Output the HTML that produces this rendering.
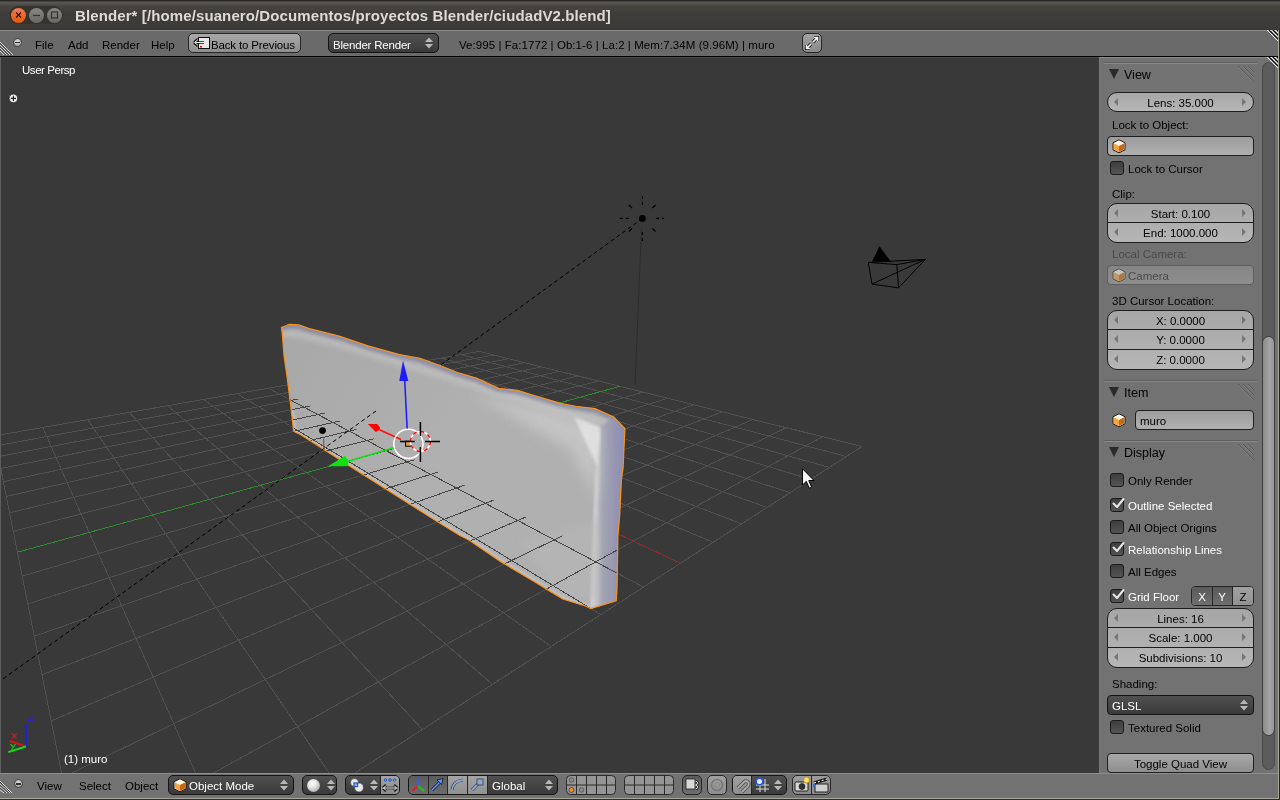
<!DOCTYPE html>
<html><head><meta charset="utf-8">
<style>
*{margin:0;padding:0;box-sizing:border-box}
html,body{width:1280px;height:800px;overflow:hidden;background:#1e1e1e;font-family:"Liberation Sans",sans-serif;font-size:11.5px}
.a{position:absolute}
.t{position:absolute;white-space:nowrap;will-change:transform;color:#000;font-size:11.5px;line-height:14px;height:14px}
.w{color:#fff}
#title{left:0;top:0;width:1280px;height:30px;background:linear-gradient(#2a2927 0px,#2a2927 1px,#5c5b56 2px,#56554f 3px,#46453f 6px,#3e3d39 14px,#3b3a36 29px,#34332f 30px);}
#hdr{left:0;top:30px;width:1278px;height:27px;background:#6a6a6a;border-top:1px solid #8c8c8c;border-bottom:1px solid #000}
#vp{left:0;top:57px;width:1099px;height:716px;background:#393939;border-left:1px solid #5e5e5e;border-top:1px solid #4a4a4a}
#np{left:1099px;top:57px;width:179px;height:716px;background:#727272;border-left:1px solid #7c7c7c;border-top:1px solid #8a8a8a}
#bhdr{left:0;top:773px;width:1278px;height:26px;background:#727272;border-top:1px solid #8e8e8e;border-bottom:1px solid #a8a69e}
#bedge{left:0;top:799px;width:1280px;height:1px;background:#2e2e2c}
#redge{left:1278px;top:30px;width:2px;height:770px;background:#a8a69e;border-right:1px solid #222}
.wb{position:absolute;top:7.5px;width:15px;height:15px;border-radius:50%;}
.rb{position:absolute;border:1px solid #191919;border-radius:4px;}
.num{background:linear-gradient(#a6a6a6,#b6b6b6);border:1px solid #1e1e1e}
.chk{position:absolute;width:14px;height:14px;border:1px solid #1a1a1a;border-radius:3px;background:linear-gradient(#3e3e3e,#545454)}
.dd{background:linear-gradient(#505050,#3a3a3a);border:1px solid #141414}
.ctr{text-align:center}
.arl{position:absolute;width:0;height:0;border-top:4px solid transparent;border-bottom:4px solid transparent;border-right:4px solid #777}
.arr{position:absolute;width:0;height:0;border-top:4px solid transparent;border-bottom:4px solid transparent;border-left:4px solid #777}
.phl{position:absolute;left:1104px;width:153px;height:2px;border-top:1px solid #5e5e5e;border-bottom:1px solid #8a8a8a}
.tri{position:absolute;width:0;height:0;border-left:5px solid transparent;border-right:5px solid transparent;border-top:10px solid #2a2a2a}
</style></head><body>
<div id="title" class="a"></div>
<div class="a" style="left:9px;top:6px;width:54px;height:18px;border-radius:9px;background:#34332f"></div>
<div class="wb" style="left:11px;background:linear-gradient(#f27c52,#ea6420 60%,#e65a10)"></div>
<div class="wb" style="left:29px;background:linear-gradient(#8a8882,#76746e 60%,#6c6a65)"></div>
<div class="wb" style="left:47px;background:linear-gradient(#8a8882,#76746e 60%,#6c6a65)"></div>
<svg class="a" style="left:0;top:0" width="70" height="30">
<path d="M16 12.5L21 17.5M21 12.5L16 17.5" stroke="#2a1408" stroke-width="1.1"/>
<path d="M33 15.5H40" stroke="#33322e" stroke-width="1.2"/>
<rect x="51.5" y="12" width="6" height="6" fill="none" stroke="#33322e" stroke-width="1.2"/>
</svg>
<div class="t" style="left:75px;top:7px;font-size:15px;line-height:18px;height:18px;font-weight:bold;color:#dfdbd2;letter-spacing:0.11px">Blender* [/home/suanero/Documentos/proyectos Blender/ciudadV2.blend]</div>

<div id="hdr" class="a"></div>
<div id="redge" class="a"></div>
<svg class="a" style="left:1267px;top:30px" width="11" height="11" shape-rendering="crispEdges"><path d="M0 0L11 11M4 0L11 7M8 0L11 3" stroke="#f0f0f0" stroke-width="1"/><path d="M2 0L11 9M6 0L11 5M10 0L11 1" stroke="#000" stroke-width="1"/></svg>
<svg class="a" style="left:0;top:30px" width="20" height="26"><path d="M0 12L13 25M0 15L10 25M0 18L7 25M0 21L4 25" stroke="#e6e6e6" stroke-width="0.9"/><path d="M0 13L12 25M0 16L9 25M0 19L6 25" stroke="#2a2a2a" stroke-width="0.6"/></svg>
<div class="a" style="left:13px;top:37.5px;width:9px;height:9px;border-radius:50%;background:radial-gradient(circle at 50% 30%,#dcdcdc,#9a9a9a);border:1px solid #444"></div>
<div class="a" style="left:15px;top:41.5px;width:5px;height:1.5px;background:#333"></div>
<div class="t" style="left:35px;top:37.6px">File</div>
<div class="t" style="left:68px;top:37.6px">Add</div>
<div class="t" style="left:102px;top:37.6px">Render</div>
<div class="t" style="left:151px;top:37.6px">Help</div>
<div class="rb" style="left:188px;top:33px;width:113px;height:20px;background:linear-gradient(#a8a8a8,#8e8e8e);border-color:#262626;border-radius:5px"></div>
<svg class="a" style="left:192px;top:35px" width="20" height="16"><rect x="6.5" y="2.5" width="11" height="11" fill="#e8e8e8" stroke="#111" stroke-width="1"/><path d="M2 7.5H12M2 7.5L6 4M2 7.5L6 11" stroke="#111" stroke-width="2.4" fill="none"/><path d="M2.6 7.5H12M2.6 7.5L6 4.6M2.6 7.5L6 10.4" stroke="#f0f0f0" stroke-width="1" fill="none"/><rect x="8" y="11" width="2" height="1.5" fill="#d00"/></svg>
<div class="t" style="left:211px;top:37.6px;letter-spacing:-0.15px">Back to Previous</div>
<div class="rb dd" style="left:328px;top:33px;width:111px;height:20px;border-radius:5px"></div>
<div class="t w" style="left:333px;top:37.6px;letter-spacing:-0.2px">Blender Render</div>
<svg class="a" style="left:424px;top:36px" width="10" height="14"><path d="M1 6L5 1.5L9 6ZM1 8L5 12.5L9 8Z" fill="#b8b8b8"/></svg>
<div class="t" style="left:459px;top:37.6px;letter-spacing:0.06px">Ve:995 | Fa:1772 | Ob:1-6 | La:2 | Mem:7.34M (9.96M) | muro</div>
<div class="rb" style="left:802px;top:33px;width:20px;height:20px;background:linear-gradient(#a2a2a2,#8a8a8a);border-color:#262626;border-radius:5px"></div>
<svg class="a" style="left:802px;top:33px" width="20" height="20"><path d="M11 9L15.5 4.5M12 4.5H15.5V8M9 11L4.5 15.5M4.5 12V15.5H8" stroke="#111" stroke-width="3.2" fill="none"/><path d="M11 9L15.5 4.5M12 4.5H15.5V8M9 11L4.5 15.5M4.5 12V15.5H8" stroke="#fff" stroke-width="1.6" fill="none"/></svg>
<div id="vp" class="a"></div>
<svg class="a" style="left:1px;top:58px" width="1098" height="715" viewBox="1 58 1098 715">
<defs>
<clipPath id="wc"><path d="M281.4,327.5 L289.3,324.4 L298.9,324.9 L308.5,328.4 L340,336.3 L368,345.9 L399.5,354.6 L420,358.4 L438.75,365 L457.5,372.5 L476.25,378.1 L498.75,388.4 L517.5,390.3 L532.5,395 L560.6,403.4 L575.6,406.25 L595,408.6 L613.75,416.9 L625,428.75 L624.4,438.75 L623.1,467.5 L621.4,480 L619.7,515 L617.9,536 L617,588.6 L616.2,600.8 L590.8,608.7 L585.5,606 L562.8,599 L547,589.4 L540,585 L500.8,561.6 L469.3,540.2 L460,535.5 L438,522 L387,489.7 L348,465 L324.75,450 L300,434.3 L296,432.5 L293.6,430.8 L291,408 L287.5,380 L284,355.5 L282.3,333.6 Z"/></clipPath>
<linearGradient id="wg" x1="280" y1="330" x2="600" y2="520" gradientUnits="userSpaceOnUse">
<stop offset="0" stop-color="#a8a8a8"/><stop offset="0.55" stop-color="#b0b0b0"/><stop offset="1" stop-color="#b0b0b2"/></linearGradient>
<filter id="bl1" x="-20%" y="-20%" width="140%" height="140%"><feGaussianBlur stdDeviation="1.6"/></filter>
<filter id="bl2" x="-20%" y="-20%" width="140%" height="140%"><feGaussianBlur stdDeviation="3"/></filter>
<filter id="bl3" x="-30%" y="-30%" width="160%" height="160%"><feGaussianBlur stdDeviation="7"/></filter>
<linearGradient id="topg" x1="0" y1="0" x2="0" y2="1"><stop offset="0" stop-color="#9a9ab0"/><stop offset="1" stop-color="#c8c8ca" stop-opacity="0"/></linearGradient>
<linearGradient id="rg" x1="594" y1="0" x2="622" y2="0" gradientUnits="userSpaceOnUse"><stop offset="0" stop-color="#cfcfd2"/><stop offset="0.3" stop-color="#a4a4b2"/><stop offset="1" stop-color="#8e8eb2"/></linearGradient>
</defs>
<path d="M-5.7,435.9L479.6,351.4 M-5.7,435.9L95.0,940.3 M-3.7,445.8L493.8,355.0 M42.8,427.5L230.8,852.8 M-1.6,456.6L508.8,358.7 M87.7,419.7L337.0,784.4 M0.8,468.5L524.7,362.6 M129.2,412.4L422.4,729.4 M3.4,481.7L541.5,366.8 M167.7,405.7L492.5,684.3 M6.4,496.4L559.3,371.3 M203.6,399.5L551.1,646.6 M9.6,512.8L578.3,376.0 M237.0,393.6L600.8,614.6 M13.3,531.3L598.4,381.0 M268.3,388.2L643.4,587.1 M22.3,576.2L642.9,392.0 M325.2,378.3L713.0,542.3 M27.8,603.9L667.5,398.2 M351.2,373.8L741.7,523.9 M34.3,636.3L693.9,404.7 M375.6,369.5L767.2,507.4 M42.0,674.7L722.3,411.8 M398.7,365.5L790.1,492.7 M51.2,720.9L753.1,419.4 M420.6,361.7L810.7,479.4 M62.5,777.5L786.3,427.7 M441.3,358.1L829.3,467.4 M76.7,848.5L822.4,436.7 M460.9,354.7L846.3,456.5 M95.0,940.3L861.8,446.5 M479.6,351.4L861.8,446.5" stroke="#4f4f4f" stroke-width="1" fill="none" shape-rendering="crispEdges"/>
<path d="M17.5,552.2L619.9,386.3" stroke="#2f8a2f" stroke-width="1" fill="none" shape-rendering="crispEdges"/>
<path d="M297.7,383.1L680.5,563.3" stroke="#8a2c2c" stroke-width="1" fill="none" shape-rendering="crispEdges"/>
<path d="M642.4,218.4 L440,365.5" stroke="#000" stroke-width="1" stroke-dasharray="4,3" fill="none"/>
<path d="M641.5,228 L635,385" stroke="#2e2e2e" stroke-width="1" fill="none"/>
<g fill="none" stroke="#000" stroke-width="1.2">
<path d="M642.4,196V205M642.4,232V241M619.75,218.4H629M656,218.4H664" stroke-dasharray="3,3"/>
<path d="M629,205L632,208M655.5,205L652.5,208M629,231.5L632,228.5M655.5,231.5L652.5,228.5"/>
</g>
<circle cx="642.4" cy="218.4" r="3.4" fill="#000"/>
<g fill="none" stroke="#000" stroke-width="1">
<path d="M868.25,262.4L872,284.1L898.6,287.9L896.75,264.6Z M868.25,262.4L925.25,259.4L872,284.1 M896.75,264.6L925.25,259.4L898.6,287.9"/>
</g>
<path d="M879.5,246.25L872,261.6L890.75,261.6Z" fill="#000"/>
<g clip-path="url(#wc)">
<rect x="270" y="315" width="370" height="300" fill="url(#wg)"/>
<path d="M275,320 L298.9,322 L340,332 L438,362 L564,399 L612,412" transform="translate(0,12)" stroke="#c6c6c6" stroke-width="5" fill="none" filter="url(#bl2)" opacity="0.9"/>
<path d="M281.4,327.5 L289.3,324.4 L298.9,324.9 L308.5,328.4 L340,336.3 L368,345.9 L399.5,354.6 L420,358.4 L438.75,365 L457.5,372.5 L476.25,378.1 L498.75,388.4 L517.5,390.3 L532.5,395 L560.6,403.4 L575.6,406.25 L595,408.6 L613.75,416.9 L625,428.75 L624.4,438.75" stroke="#8888a4" stroke-width="8" fill="none" filter="url(#bl1)" opacity="0.8"/>
<path d="M598,428 L613.75,416.9 L630,430 L630,612 L590.8,610 Z" fill="url(#rg)" filter="url(#bl1)"/>
<path d="M598.7,432 L591.5,606" stroke="#d4d4d4" stroke-width="2.5" filter="url(#bl1)"/>
<path d="M470,392 L560,412 L600,426 L598,500 L570,450 Z" fill="#d4d4d4" opacity="0.55" filter="url(#bl3)"/>
<path d="M574,417 L600,427 L597,466 Z" fill="#ececec" opacity="0.7" filter="url(#bl1)"/>
<path d="M520,540 L598,520 L597,600 L560,598Z" fill="#b8b8b8" opacity="0.5" filter="url(#bl2)"/>
<path d="M291,408 L293.6,430.8 L296,432.5 L300,434.3 L324.75,450 L348,465 L387,489.7 L438,522 L460,535.5 L469.3,540.2 L500.8,561.6 L540,585 L547,589.4 L562.8,599 L585.5,606 L590.8,608.7" stroke="#c8c8cc" stroke-width="5" fill="none" filter="url(#bl1)" opacity="0.8"/>
<g clip-path="url(#lw)"><path d="M-5.7,435.9L479.6,351.4 M-5.7,435.9L95.0,940.3 M-3.7,445.8L493.8,355.0 M42.8,427.5L230.8,852.8 M-1.6,456.6L508.8,358.7 M87.7,419.7L337.0,784.4 M0.8,468.5L524.7,362.6 M129.2,412.4L422.4,729.4 M3.4,481.7L541.5,366.8 M167.7,405.7L492.5,684.3 M6.4,496.4L559.3,371.3 M203.6,399.5L551.1,646.6 M9.6,512.8L578.3,376.0 M237.0,393.6L600.8,614.6 M13.3,531.3L598.4,381.0 M268.3,388.2L643.4,587.1 M22.3,576.2L642.9,392.0 M325.2,378.3L713.0,542.3 M27.8,603.9L667.5,398.2 M351.2,373.8L741.7,523.9 M34.3,636.3L693.9,404.7 M375.6,369.5L767.2,507.4 M42.0,674.7L722.3,411.8 M398.7,365.5L790.1,492.7 M51.2,720.9L753.1,419.4 M420.6,361.7L810.7,479.4 M62.5,777.5L786.3,427.7 M441.3,358.1L829.3,467.4 M76.7,848.5L822.4,436.7 M460.9,354.7L846.3,456.5 M95.0,940.3L861.8,446.5 M479.6,351.4L861.8,446.5 M17.5,552.2L619.9,386.3 M297.7,383.1L680.5,563.3" stroke="#464646" stroke-width="1" fill="none" shape-rendering="crispEdges"/></g>
</g>
<clipPath id="lw"><path d="M280,390 L565,537 L600,548 L626,538 L626,620 L280,620Z"/></clipPath>
<path d="M281.4,327.5 L289.3,324.4 L298.9,324.9 L308.5,328.4 L340,336.3 L368,345.9 L399.5,354.6 L420,358.4 L438.75,365 L457.5,372.5 L476.25,378.1 L498.75,388.4 L517.5,390.3 L532.5,395 L560.6,403.4 L575.6,406.25 L595,408.6 L613.75,416.9 L625,428.75 L624.4,438.75 L623.1,467.5 L621.4,480 L619.7,515 L617.9,536 L617,588.6 L616.2,600.8 L590.8,608.7 L585.5,606 L562.8,599 L547,589.4 L540,585 L500.8,561.6 L469.3,540.2 L460,535.5 L438,522 L387,489.7 L348,465 L324.75,450 L300,434.3 L296,432.5 L293.6,430.8 L291,408 L287.5,380 L284,355.5 L282.3,333.6 Z" fill="none" stroke="#f7901c" stroke-width="1.25"/>
<path d="M376,411 L0,681" stroke="#000" stroke-width="1" stroke-dasharray="4,3" fill="none"/>
<circle cx="322.5" cy="430.6" r="3.4" fill="#000"/>
<path d="M323.8,438.5V450" stroke="#555" stroke-width="1"/>
<path d="M407.2,429.5L404.75,381" stroke="#2020ff" stroke-width="1.6"/>
<path d="M403,360.5L399.3,381L408.3,381Z" fill="#1c1cff"/>
<path d="M401,439.6L380,429.9" stroke="#ff1010" stroke-width="1.6"/>
<path d="M367.9,423.9L377.25,423.9L379.9,427.25L379.9,429.9L375.75,432.1Z" fill="#ff0000"/>
<path d="M394.5,447.5L346,462" stroke="#10e010" stroke-width="1.8"/>
<path d="M328,466.2L345,455.8L348.8,461.2L347.5,466.2Z" fill="#10e010"/>
<path d="M375.4,438.5h1" stroke="#f0901e" stroke-width="1.5"/>
<circle cx="408.4" cy="443.8" r="14.6" fill="none" stroke="#fff" stroke-width="1.5"/>
<rect x="405.6" y="441.2" width="5" height="5" fill="#f0a040" stroke="#000" stroke-width="1"/>
<circle cx="420.4" cy="441.5" r="10" fill="none" stroke="#fff" stroke-width="1.5"/>
<circle cx="420.4" cy="441.5" r="10" fill="none" stroke="#f00" stroke-width="1.5" stroke-dasharray="3.9,3.9"/>
<path d="M420.4,422V436M420.4,447V462M400,441.5H414.8M425,441.5H440" stroke="#000" stroke-width="1.5"/>
<path d="M25.9,746.5V723.3" stroke="#2020e0" stroke-width="2"/>
<path d="M25.9,746.5L9.8,740.9" stroke="#e01010" stroke-width="2"/>
<path d="M25.9,746.5L8.3,752.1" stroke="#10e010" stroke-width="2"/>
<g fill="none" stroke-width="1.2">
<path d="M28.5,715.5H33L28.5,720.5H33" stroke="#2626c8"/>
<path d="M12,733.5L16.5,738.5M16.5,733.5L12,738.5" stroke="#c02020"/>
<path d="M10.5,744L13,747M15.5,744L11,751" stroke="#20c020"/>
</g>
<circle cx="13.4" cy="98.4" r="4.3" fill="#f0f0f0" stroke="#222" stroke-width="0.8"/>
<path d="M13.4,95.8V101M10.8,98.4H16" stroke="#222" stroke-width="1.2"/>
<path d="M802.5,468.8V485L806.3,481.4L809.3,488.2L811.6,487.2L808.8,480.5H814Z" fill="#f4f4f4" stroke="#000" stroke-width="1"/>
</svg>
<div class="t w" style="left:22px;top:63px;letter-spacing:-0.45px">User Persp</div>
<div class="t w" style="left:64px;top:752px">(1) muro</div>
<div id="np" class="a"></div>
<svg class="a" style="left:1266px;top:57px" width="12" height="12" shape-rendering="crispEdges"><path d="M1 0L12 11M5 0L12 7M9 0L12 3" stroke="#f0f0f0" stroke-width="1"/><path d="M3 0L12 9M7 0L12 5M11 0L12 1" stroke="#000" stroke-width="1"/></svg>
<!-- scrollbar -->
<div class="a" style="left:1262px;top:62px;width:13px;height:708px;border-radius:6.5px;background:#5c5c5c;border:1px solid #4a4a4a"></div>
<div class="a" style="left:1262px;top:336px;width:13px;height:400px;border-radius:6.5px;background:linear-gradient(90deg,#8a8a8a,#a4a4a4 60%,#969696);border:1px solid #3e3e3e"></div>

<!-- View panel -->
<div class="phl" style="top:62px"></div>
<svg class="a" style="left:1237px;top:66px" width="20" height="18"><path d="M1 0L17 16M6 0L17 11M11 0L17 6" stroke="#5a5a5a" stroke-width="1"/><path d="M1 1L16 16M6 1L16 11M11 1L16 6" stroke="#8a8a8a" stroke-width="0.6"/></svg>
<div class="tri" style="left:1109px;top:69px"></div>
<div class="t" style="left:1124px;top:67px;font-size:12.5px;line-height:16px">View</div>

<div class="rb num" style="left:1107px;top:92px;width:147px;height:20px;border-radius:10px"></div>
<div class="arl" style="left:1114px;top:98px"></div><div class="arr" style="left:1242px;top:98px"></div>
<div class="t ctr" style="left:1107px;top:96px;width:147px">Lens: 35.000</div>

<div class="t" style="left:1112px;top:118px">Lock to Object:</div>
<div class="rb" style="left:1107px;top:136px;width:147px;height:20px;background:linear-gradient(#9c9c9c,#b0b0b0);border-color:#1e1e1e"></div>
<svg class="a" style="left:1112px;top:139px" width="15" height="15"><path d="M7 0.8L13 3.8V10.8L7 13.8L1 10.8V3.8Z" fill="#f9f0e4" stroke="#2a1a08" stroke-width="1"/><path d="M7 6.8L12 4.3V10.5L7 13Z" fill="#c86a10"/><path d="M7 6.8L2 4.3V10.5L7 13Z" fill="#f5a443"/><path d="M2 4.3L7 1.8L12 4.3L7 6.8Z" fill="#fff6ea"/></svg>

<div class="chk" style="left:1110px;top:161px"></div>
<div class="t" style="left:1128px;top:162px">Lock to Cursor</div>

<div class="t" style="left:1112px;top:187px">Clip:</div>
<div class="rb num" style="left:1107px;top:203px;width:147px;height:40px;border-radius:10px"></div>
<div class="a" style="left:1108px;top:222px;width:145px;height:1px;background:#1e1e1e"></div>
<div class="arl" style="left:1114px;top:209px"></div><div class="arr" style="left:1242px;top:209px"></div>
<div class="arl" style="left:1114px;top:228px"></div><div class="arr" style="left:1242px;top:228px"></div>
<div class="t ctr" style="left:1107px;top:207px;width:147px">Start: 0.100</div>
<div class="t ctr" style="left:1107px;top:226px;width:147px">End: 1000.000</div>

<div class="t" style="left:1112px;top:247px;color:#4a4a4a">Local Camera:</div>
<div class="rb" style="left:1107px;top:265px;width:147px;height:20px;background:linear-gradient(#858585,#8e8e8e);border-color:#5e5e5e"></div>
<svg class="a" style="left:1112px;top:268px;opacity:0.55" width="15" height="15"><path d="M7 0.8L13 3.8V10.8L7 13.8L1 10.8V3.8Z" fill="#f9f0e4" stroke="#2a1a08" stroke-width="1"/><path d="M7 6.8L12 4.3V10.5L7 13Z" fill="#c86a10"/><path d="M7 6.8L2 4.3V10.5L7 13Z" fill="#f5a443"/><path d="M2 4.3L7 1.8L12 4.3L7 6.8Z" fill="#fff6ea"/></svg>
<div class="t" style="left:1128px;top:269px;color:#4a4a4a">Camera</div>

<div class="t" style="left:1112px;top:294px">3D Cursor Location:</div>
<div class="rb num" style="left:1107px;top:310px;width:147px;height:60px;border-radius:10px"></div>
<div class="a" style="left:1108px;top:329px;width:145px;height:1px;background:#1e1e1e"></div>
<div class="a" style="left:1108px;top:349px;width:145px;height:1px;background:#1e1e1e"></div>
<div class="arl" style="left:1114px;top:316px"></div><div class="arr" style="left:1242px;top:316px"></div>
<div class="arl" style="left:1114px;top:335px"></div><div class="arr" style="left:1242px;top:335px"></div>
<div class="arl" style="left:1114px;top:355px"></div><div class="arr" style="left:1242px;top:355px"></div>
<div class="t ctr" style="left:1107px;top:314px;width:147px">X: 0.0000</div>
<div class="t ctr" style="left:1107px;top:333px;width:147px">Y: 0.0000</div>
<div class="t ctr" style="left:1107px;top:353px;width:147px">Z: 0.0000</div>

<!-- Item panel -->
<div class="phl" style="top:380px"></div>
<svg class="a" style="left:1237px;top:384px" width="20" height="18"><path d="M1 0L17 16M6 0L17 11M11 0L17 6" stroke="#5a5a5a" stroke-width="1"/><path d="M1 1L16 16M6 1L16 11M11 1L16 6" stroke="#8a8a8a" stroke-width="0.6"/></svg>
<div class="tri" style="left:1109px;top:387px"></div>
<div class="t" style="left:1124px;top:385px;font-size:12.5px;line-height:16px">Item</div>
<svg class="a" style="left:1112px;top:413px" width="15" height="15"><path d="M7 0.8L13 3.8V10.8L7 13.8L1 10.8V3.8Z" fill="#f9f0e4" stroke="#2a1a08" stroke-width="1"/><path d="M7 6.8L12 4.3V10.5L7 13Z" fill="#c86a10"/><path d="M7 6.8L2 4.3V10.5L7 13Z" fill="#f5a443"/><path d="M2 4.3L7 1.8L12 4.3L7 6.8Z" fill="#fff6ea"/></svg>
<div class="rb" style="left:1135px;top:410px;width:119px;height:20px;background:linear-gradient(#9c9c9c,#b0b0b0);border-color:#1e1e1e"></div>
<div class="t" style="left:1140px;top:414px">muro</div>

<!-- Display panel -->
<div class="phl" style="top:440px"></div>
<svg class="a" style="left:1237px;top:444px" width="20" height="18"><path d="M1 0L17 16M6 0L17 11M11 0L17 6" stroke="#5a5a5a" stroke-width="1"/><path d="M1 1L16 16M6 1L16 11M11 1L16 6" stroke="#8a8a8a" stroke-width="0.6"/></svg>
<div class="tri" style="left:1109px;top:447px"></div>
<div class="t" style="left:1124px;top:445px;font-size:12.5px;line-height:16px">Display</div>

<div class="chk" style="left:1110px;top:473px"></div>
<div class="t" style="left:1128px;top:474px">Only Render</div>
<div class="chk" style="left:1110px;top:498px"></div>
<div class="t w" style="left:1128px;top:499px">Outline Selected</div>
<div class="chk" style="left:1110px;top:520px"></div>
<div class="t" style="left:1128px;top:521px">All Object Origins</div>
<div class="chk" style="left:1110px;top:542px"></div>
<div class="t w" style="left:1128px;top:543px">Relationship Lines</div>
<div class="chk" style="left:1110px;top:564px"></div>
<div class="t" style="left:1128px;top:565px">All Edges</div>
<div class="chk" style="left:1110px;top:589px"></div>
<div class="t w" style="left:1128px;top:590px">Grid Floor</div>
<svg class="a" style="left:1110px;top:495px" width="20" height="110"><g fill="none" stroke="#e8e8e8" stroke-width="2" stroke-linecap="round" stroke-linejoin="round"><path d="M3.5 8.5L7 12L13.5 4"/><path d="M3.5 52.5L7 56L13.5 48"/><path d="M3.5 99.5L7 103L13.5 95"/></g></svg>
<div class="rb" style="left:1191px;top:586px;width:63px;height:20px;background:#999;border-color:#262626"></div>
<div class="a" style="left:1192px;top:587px;width:20px;height:18px;background:linear-gradient(#5a5a5a,#6e6e6e);border-radius:3px 0 0 3px"></div>
<div class="a" style="left:1212px;top:587px;width:20px;height:18px;background:linear-gradient(#5a5a5a,#6e6e6e);border-left:1px solid #262626"></div>
<div class="a" style="left:1232px;top:587px;width:21px;height:18px;background:linear-gradient(#a0a0a0,#929292);border-left:1px solid #262626;border-radius:0 3px 3px 0"></div>
<div class="t w ctr" style="left:1192px;top:590px;width:20px">X</div>
<div class="t w ctr" style="left:1212px;top:590px;width:20px">Y</div>
<div class="t ctr" style="left:1233px;top:590px;width:20px">Z</div>

<div class="rb num" style="left:1107px;top:608px;width:147px;height:60px;border-radius:10px"></div>
<div class="a" style="left:1108px;top:627px;width:145px;height:1px;background:#1e1e1e"></div>
<div class="a" style="left:1108px;top:647px;width:145px;height:1px;background:#1e1e1e"></div>
<div class="arl" style="left:1114px;top:614px"></div><div class="arr" style="left:1242px;top:614px"></div>
<div class="arl" style="left:1114px;top:633px"></div><div class="arr" style="left:1242px;top:633px"></div>
<div class="arl" style="left:1114px;top:653px"></div><div class="arr" style="left:1242px;top:653px"></div>
<div class="t ctr" style="left:1107px;top:612px;width:147px">Lines: 16</div>
<div class="t ctr" style="left:1107px;top:631px;width:147px">Scale: 1.000</div>
<div class="t ctr" style="left:1107px;top:651px;width:147px">Subdivisions: 10</div>

<div class="t" style="left:1112px;top:677px">Shading:</div>
<div class="rb dd" style="left:1107px;top:695px;width:147px;height:20px"></div>
<div class="t w" style="left:1112px;top:699px">GLSL</div>
<svg class="a" style="left:1239px;top:698px" width="10" height="14"><path d="M1 6L5 1.5L9 6ZM1 8L5 12.5L9 8Z" fill="#b8b8b8"/></svg>
<div class="chk" style="left:1110px;top:720px"></div>
<div class="t" style="left:1128px;top:721px">Textured Solid</div>

<div class="rb" style="left:1107px;top:753px;width:147px;height:20px;background:linear-gradient(#a8a8a8,#8e8e8e);border-color:#1e1e1e"></div>
<div class="t ctr" style="left:1107px;top:757px;width:147px">Toggle Quad View</div>
<div id="bhdr" class="a"></div><div id="bedge" class="a"></div>
<svg class="a" style="left:0;top:773px" width="20" height="26"><path d="M0 8L12 20M0 11L10 20M0 14L7 20M0 17L4 20" stroke="#e6e6e6" stroke-width="0.9"/><path d="M0 9L11 20M0 12L9 20M0 15L6 20" stroke="#2a2a2a" stroke-width="0.6"/></svg>
<div class="a" style="left:14px;top:779px;width:9px;height:9px;border-radius:50%;background:radial-gradient(circle at 50% 30%,#dcdcdc,#9a9a9a);border:1px solid #444"></div>
<div class="a" style="left:16px;top:783px;width:5px;height:1.5px;background:#333"></div>
<div class="t" style="left:37px;top:779px">View</div>
<div class="t" style="left:79px;top:779px">Select</div>
<div class="t" style="left:125px;top:779px">Object</div>

<div class="rb dd" style="left:168px;top:775px;width:126px;height:20px;border-radius:5px"></div>
<svg class="a" style="left:173px;top:778px" width="15" height="15"><path d="M7 0.8L13 3.8V10.8L7 13.8L1 10.8V3.8Z" fill="#f9f0e4" stroke="#2a1a08" stroke-width="1"/><path d="M7 6.8L12 4.3V10.5L7 13Z" fill="#c86a10"/><path d="M7 6.8L2 4.3V10.5L7 13Z" fill="#f5a443"/><path d="M2 4.3L7 1.8L12 4.3L7 6.8Z" fill="#fff6ea"/></svg>
<div class="t w" style="left:189px;top:779px">Object Mode</div>
<svg class="a" style="left:279px;top:778px" width="10" height="14"><path d="M1 6L5 1.5L9 6ZM1 8L5 12.5L9 8Z" fill="#b8b8b8"/></svg>

<div class="rb dd" style="left:302px;top:775px;width:35px;height:20px;border-radius:5px"></div>
<div class="a" style="left:307px;top:779px;width:13px;height:13px;border-radius:50%;background:radial-gradient(circle at 40% 35%,#fff,#e0e0e0 40%,#8a8a8a 100%)"></div>
<svg class="a" style="left:326px;top:778px" width="10" height="14"><path d="M1 6L5 1.5L9 6ZM1 8L5 12.5L9 8Z" fill="#b8b8b8"/></svg>

<div class="rb dd" style="left:345px;top:775px;width:55px;height:20px;border-radius:5px"></div>
<div class="a" style="left:380px;top:776px;width:19px;height:18px;background:linear-gradient(#a4a4a4,#8c8c8c);border-left:1px solid #222;border-radius:0 4px 4px 0"></div>
<svg class="a" style="left:349px;top:777px" width="16" height="16"><circle cx="5.5" cy="5.5" r="4" fill="#e8e8e8" stroke="#333" stroke-width="0.6"/><circle cx="10" cy="10.5" r="4.5" fill="#e8e8e8" stroke="#333" stroke-width="0.6"/><rect x="5" y="6" width="3.5" height="3.5" fill="none" stroke="#1a5ad8" stroke-width="1.3"/></svg>
<svg class="a" style="left:369px;top:778px" width="10" height="14"><path d="M1 6L5 1.5L9 6ZM1 8L5 12.5L9 8Z" fill="#b8b8b8"/></svg>
<svg class="a" style="left:381px;top:777px" width="18" height="16"><g fill="none" stroke="#1a5ad8" stroke-width="1"><circle cx="4.5" cy="3" r="1.3"/><circle cx="9" cy="3" r="1.3"/><circle cx="13.5" cy="3" r="1.3"/></g><path d="M2 11H16M2 11L5 8M2 11L5 14M16 11L13 8M16 11L13 14" stroke="#111" stroke-width="2.6" fill="none"/><path d="M2.5 11H15.5M2.5 11L5 8.5M2.5 11L5 13.5M15.5 11L13 8.5M15.5 11L13 13.5" stroke="#fff" stroke-width="1" fill="none"/></svg>

<!-- manipulator group -->
<div class="rb" style="left:408px;top:775px;width:150px;height:20px;background:linear-gradient(#505050,#3a3a3a);border-color:#141414;border-radius:5px"></div>
<div class="a" style="left:409px;top:776px;width:19px;height:18px;background:linear-gradient(#5c5c5c,#6c6c6c);border-radius:4px 0 0 4px"></div>
<div class="a" style="left:428px;top:776px;width:19px;height:18px;background:linear-gradient(#5c5c5c,#6c6c6c);border-left:1px solid #262626"></div>
<div class="a" style="left:447px;top:776px;width:20px;height:18px;background:linear-gradient(#a4a4a4,#909090);border-left:1px solid #262626"></div>
<div class="a" style="left:467px;top:776px;width:20px;height:18px;background:linear-gradient(#a4a4a4,#909090);border-left:1px solid #262626"></div>
<div class="a" style="left:487px;top:776px;width:1px;height:18px;background:#262626"></div>
<svg class="a" style="left:408px;top:775px" width="80" height="20"><path d="M10 4V11L4 16M10 11L16 16" stroke="#fff" stroke-width="0" fill="none"/><path d="M10 3V11" stroke="#3060e0" stroke-width="2"/><path d="M10 11L4 16" stroke="#e02020" stroke-width="2"/><path d="M10 11L16 16" stroke="#20c020" stroke-width="2"/><path d="M24 15L33 6" stroke="#111" stroke-width="2.8"/><path d="M24 15L33 6" stroke="#5a9aff" stroke-width="1.6"/><path d="M35 3.5L29 5L33.5 9.5Z" fill="#5a9aff" stroke="#111" stroke-width="0.8"/><path d="M44 15Q45 6 55 5" stroke="#3a3a3a" stroke-width="3" fill="none"/><path d="M44 15Q45 6 55 5" stroke="#88a8d8" stroke-width="1.8" fill="none"/><path d="M64 15L71 8" stroke="#3a3a3a" stroke-width="3"/><path d="M64 15L71 8" stroke="#88a8d8" stroke-width="1.8"/><rect x="69" y="4" width="6" height="6" fill="#88a8d8" stroke="#3a3a3a" stroke-width="0.8"/></svg>
<div class="t w" style="left:492px;top:779px">Global</div>
<svg class="a" style="left:544px;top:778px" width="10" height="14"><path d="M1 6L5 1.5L9 6ZM1 8L5 12.5L9 8Z" fill="#b8b8b8"/></svg>

<!-- layers -->
<svg class="a" style="left:566px;top:775px" width="110" height="20">
<g fill="#959595" stroke="#2a2a2a" stroke-width="1">
<rect x="0.5" y="0.5" width="49" height="19" rx="4"/>
<rect x="58.5" y="0.5" width="49" height="19" rx="4"/>
</g>
<path d="M10.5 1V19M20.5 1V19M30.5 1V19M40.5 1V19M1 10H49M68.5 1V19M78.5 1V19M88.5 1V19M98.5 1V19M59 10H107" stroke="#2a2a2a" stroke-width="1"/>
<circle cx="5.5" cy="5" r="2.3" fill="#8a8a8a" stroke="#555" stroke-width="0.8"/>
<circle cx="15.5" cy="15" r="2.3" fill="#8a8a8a" stroke="#555" stroke-width="0.8"/>
<circle cx="5.5" cy="15" r="2.5" fill="#f08a20" stroke="#444" stroke-width="0.8"/>
</svg>

<div class="rb" style="left:682px;top:775px;width:20px;height:20px;background:linear-gradient(#5c5c5c,#6c6c6c);border-color:#262626;border-radius:5px"></div>
<svg class="a" style="left:682px;top:775px" width="20" height="20"><rect x="4" y="4" width="9" height="10" fill="#d8d8d8" stroke="#222" stroke-width="0.8"/><path d="M13.5 6a2 2 0 0 1 0 4M13.5 10a2 2 0 0 1 0 4" stroke="#111" stroke-width="2.2" fill="none"/><path d="M13.5 6a2 2 0 0 1 0 4M13.5 10a2 2 0 0 1 0 4" stroke="#eee" stroke-width="1" fill="none"/></svg>
<div class="rb" style="left:707px;top:775px;width:20px;height:20px;background:linear-gradient(#a0a0a0,#8e8e8e);border-color:#262626;border-radius:5px"></div>
<svg class="a" style="left:707px;top:775px" width="20" height="20"><circle cx="10" cy="10" r="5.5" fill="none" stroke="#7a7a7a" stroke-width="1.6"/><circle cx="10" cy="10" r="2.5" fill="none" stroke="#8a8a8a" stroke-width="1"/></svg>
<div class="rb" style="left:732px;top:775px;width:55px;height:20px;background:linear-gradient(#505050,#3a3a3a);border-color:#141414;border-radius:5px"></div>
<div class="a" style="left:733px;top:776px;width:19px;height:18px;background:linear-gradient(#a0a0a0,#8e8e8e);border-right:1px solid #262626;border-radius:4px 0 0 4px"></div>
<svg class="a" style="left:733px;top:775px" width="20" height="20"><path d="M5 13L11 7a2.8 2.8 0 0 1 4 4L9 17" stroke="#555" stroke-width="3.6" fill="none"/><path d="M5 13L11 7a2.8 2.8 0 0 1 4 4L9 17" stroke="#a8a8a8" stroke-width="1.8" fill="none"/></svg>
<svg class="a" style="left:753px;top:775px" width="20" height="20"><path d="M7 4V17M12 4V17M3 10H16M3 14H16" stroke="#ddd" stroke-width="1"/><circle cx="6.5" cy="6.5" r="3.2" fill="#e8f0ff" stroke="#2a5ad8" stroke-width="1.4"/></svg>
<svg class="a" style="left:773px;top:778px" width="10" height="14"><path d="M1 6L5 1.5L9 6ZM1 8L5 12.5L9 8Z" fill="#b8b8b8"/></svg>

<div class="rb" style="left:792px;top:775px;width:39px;height:20px;background:linear-gradient(#9c9c9c,#8a8a8a);border-color:#262626;border-radius:5px"></div>
<div class="a" style="left:811px;top:776px;width:1px;height:18px;background:#262626"></div>
<svg class="a" style="left:792px;top:775px" width="40" height="20"><rect x="3" y="7" width="13" height="9" rx="1" fill="#d8d8d8" stroke="#111" stroke-width="0.9"/><circle cx="10" cy="11.5" r="3" fill="#333" stroke="#111" stroke-width="0.6"/><circle cx="14.5" cy="5" r="3" fill="#ffe060" stroke="#9a7a00" stroke-width="0.6"/><rect x="23" y="9" width="13" height="8" fill="#d0d0d0" stroke="#111" stroke-width="0.9"/><path d="M22 8L35 4" stroke="#111" stroke-width="3"/><path d="M22 8L35 4" stroke="#eee" stroke-width="1.2" stroke-dasharray="2,2"/><path d="M22 9v3" stroke="#3a6ad8" stroke-width="2"/></svg>
</body></html>
